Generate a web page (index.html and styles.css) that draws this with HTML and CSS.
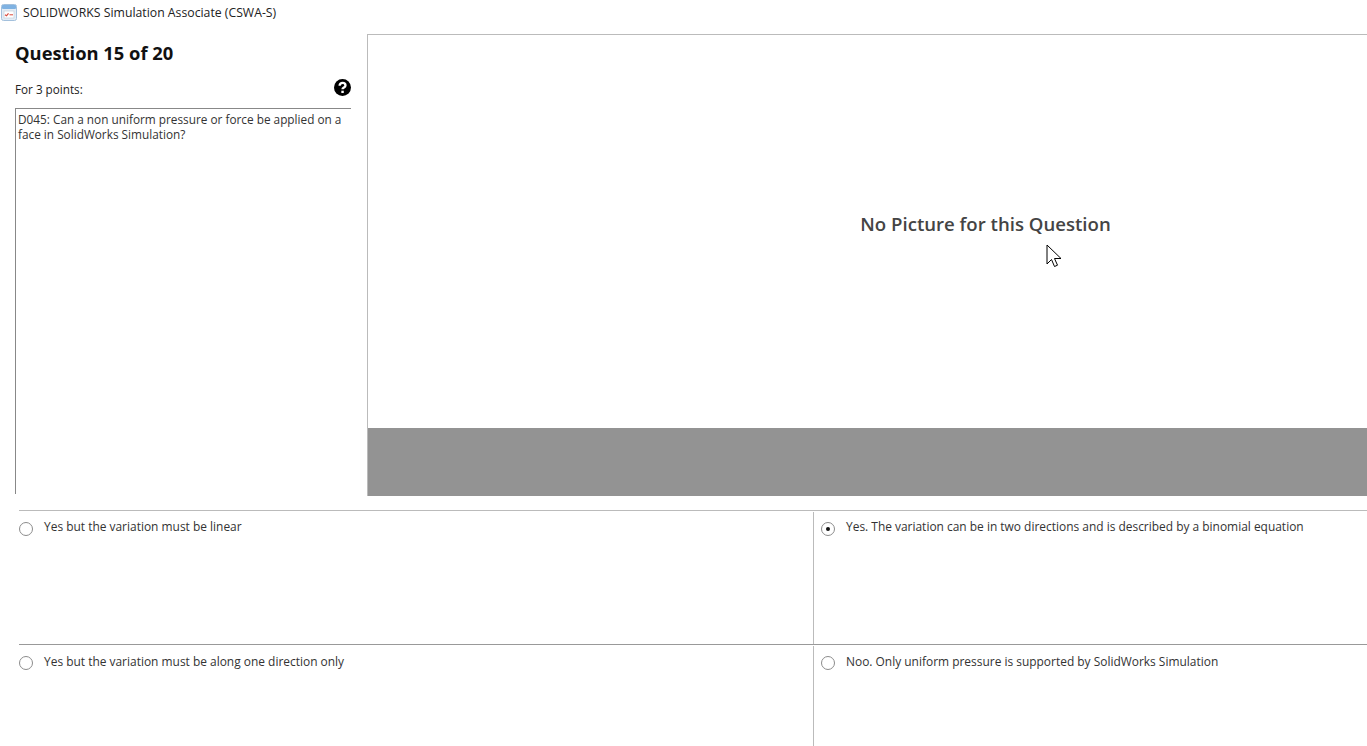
FILE: index.html
```html
<!DOCTYPE html>
<html lang="en">
<head>
    <meta charset="UTF-8">
    <title>SOLIDWORKS Simulation Associate (CSWA-S)</title>
    <link rel="stylesheet" href="styles.css">
</head>
<body>
<div class="title-bar">
    <svg class="app-icon" width="16" height="17" viewBox="0 0 16 17">
        <rect x="0.5" y="0.5" width="15" height="16" rx="2" fill="#e3ecf5" stroke="#a3c0dc"/>
        <rect x="1" y="1" width="14" height="4" rx="1" fill="#7fb2e2"/>
        <rect x="3" y="7" width="10" height="7" fill="#fff" stroke="#c3d0dd" stroke-width="0.7"/>
        <path d="M4 10.800l1.500 1 2-2.500" fill="none" stroke="#d9483b" stroke-width="1.200"/>
        <path d="M8.500 10.800h3.500" stroke="#d9483b" stroke-width="1"/>
    </svg>
    <span>SOLIDWORKS Simulation Associate (CSWA-S)</span>
</div>
<div class="top">
    <div class="question">
        <h1>Question 15 of 20</h1>
        <div class="points-row">
            <span>For 3 points:</span>
            <svg class="help-icon" width="17" height="17" viewBox="0 0 16 16">
                <circle cx="8" cy="8" r="8" fill="#000"/>
                <path d="M5.300 6.300c0-1.600 1.200-2.700 2.800-2.700s2.700 1 2.700 2.400c0 2-2.800 1.900-2.800 3.700" fill="none" stroke="#fff" stroke-width="2.200"/>
                <rect x="6.900" y="11" width="2.300" height="2.200" fill="#fff"/>
            </svg>
        </div>
        <div class="question-text">D045: Can a non uniform pressure or force be applied on a face in SolidWorks Simulation?</div>
    </div>
    <div class="picture">
        <div class="no-picture">No Picture for this Question</div>
        <div class="picture-footer"></div>
    </div>
</div>
<div class="answers">
    <div class="answer">
        <span class="radio"></span>
        <span>Yes but the variation must be linear</span>
    </div>
    <div class="answer answer-right">
        <span class="radio checked"></span>
        <span>Yes. The variation can be in two directions and is described by a binomial equation</span>
    </div>
    <div class="answer answer-lower">
        <span class="radio"></span>
        <span>Yes but the variation must be along one direction only</span>
    </div>
    <div class="answer answer-right answer-lower">
        <span class="radio"></span>
        <span>Noo. Only uniform pressure is supported by SolidWorks Simulation</span>
    </div>
</div>
<svg class="cursor" width="17" height="25" viewBox="0 0 17 25">
    <path d="M1 1v19l4.500-4.500 3 7 3-1.300-3-6.700h6.500z" fill="#fff" stroke="#000" stroke-width="1"/>
</svg>
</body>
</html>
```

FILE: styles.css
```css
html, body {
    margin: 0;
    height: 100%;
    overflow: hidden;
}
body {
    font-family: "Open Sans", "Noto Sans", sans-serif;
    font-size: 11.95px;
    color: #333;
    background-color: #fff;
    display: flex;
    flex-direction: column;
    height: 746px;
}
.title-bar {
    height: 24px;
    padding-left: 1px;
    display: flex;
    align-items: center;
    gap: 6px;
    font-size: 12.25px;
    color: #222;
}
.app-icon {
    flex: none;
}
.top {
    margin-top: 10px;
    height: 462px;
    display: grid;
    grid-template-columns: 367px 1fr;
}
.question {
    padding: 0 16px 2px 15px;
    display: flex;
    flex-direction: column;
}
h1 {
    margin: 7px 0 0;
    font-size: 18.35px;
    line-height: 24px;
    font-weight: 700;
    color: #111;
}
.points-row {
    margin-top: 10px;
    height: 33px;
    display: flex;
    justify-content: space-between;
    align-items: flex-start;
    font-size: 11.7px;
    color: #222;
}
.points-row span {
    margin-top: 6px;
}
.help-icon {
    margin-top: 4px;
}
.question-text {
    flex: 1;
    border-top: 1px solid #888;
    border-left: 1px solid #888;
    padding: 3px 4px 0 2px;
    line-height: 15px;
    font-size: 11.8px;
}
.picture {
    border-top: 1px solid #bbb;
    border-left: 1px solid #bbb;
    display: flex;
    flex-direction: column;
}
.no-picture {
    flex: 1;
    display: flex;
    justify-content: center;
    padding-left: 236px;
    padding-top: 176px;
    box-sizing: border-box;
    font-size: 18.6px;
    font-weight: 600;
    color: #444;
}
.picture-footer {
    height: 68px;
    background-color: #939393;
}
.answers {
    margin-top: 14px;
    margin-left: 19px;
    flex: 1;
    display: grid;
    grid-template-columns: 794px 1fr;
    grid-template-rows: 134px 1fr;
}
.answer {
    border-top: 1px solid #bbb;
    padding-top: 7px;
    display: flex;
    align-items: flex-start;
    gap: 11px;
}
.answer-lower {
    border-top-color: #999;
    padding-top: 8px;
}
.answer-right {
    padding-left: 8px;
    background: linear-gradient(#bbb, #bbb) 0 1px / 1px 100% no-repeat;
}
.radio {
    width: 12px;
    height: 12px;
    margin-top: 4px;
    border: 1px solid #8c8c8c;
    border-radius: 50%;
    display: flex;
    align-items: center;
    justify-content: center;
    flex: none;
}
.answer-lower .radio {
    margin-top: 3px;
}
.radio.checked::after {
    content: "";
    width: 4px;
    height: 4px;
    border-radius: 50%;
    background-color: #111;
}
.cursor {
    position: absolute;
    left: 1046px;
    top: 244px;
}
```
